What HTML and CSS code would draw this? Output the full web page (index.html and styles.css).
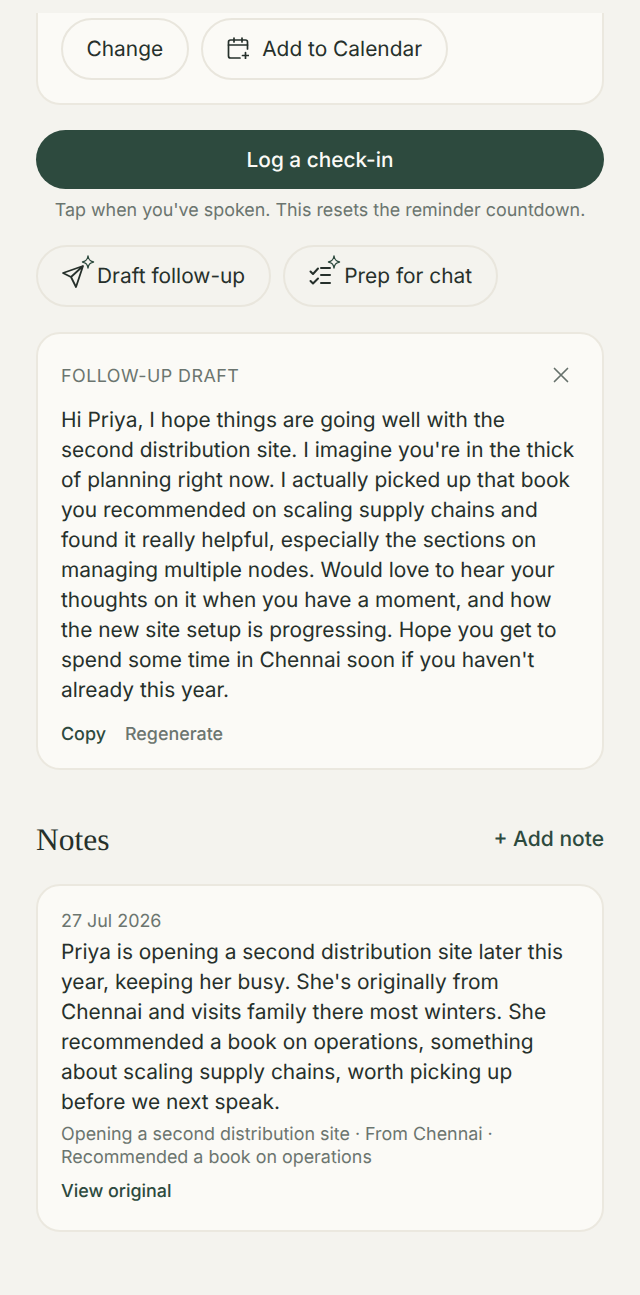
FILE: index.html
```html
<!doctype html>
<html lang="en">
<head>
	<meta charset="UTF-8"/>
	<title>Contact</title>
	<link rel="stylesheet" href="styles.css">
</head>
<body>
	<div class="wrap">
		<div class="card cardTop">
			<div class="btnRow">
				<a href="#" class="pill">Change</a>
				<a href="#" class="pill pillCal">
					<svg class="calIcon" width="22" height="22" viewBox="0 0 22 22" fill="none" stroke="#26302b" stroke-width="1.700" stroke-linecap="round" stroke-linejoin="round">
						<path d="M20.500 12V5a2 2 0 0 0-2-2H3.500a2 2 0 0 0-2 2v14a2 2 0 0 0 2 2H13"/>
						<path d="M1.500 8h19M7 1v4M15 1v4M18.500 15.500v6M15.500 18.500h6"/>
					</svg>
					Add to Calendar
				</a>
			</div>
		</div>

		<a href="#" class="logBtn">Log a check-in</a>
		<p class="hint">Tap when you've spoken. This resets the reminder countdown.</p>

		<div class="btnRow aiRow">
			<a href="#" class="pill pillAi">
				<svg class="aiIcon" width="36" height="36" viewBox="0 0 36 36" fill="none" stroke-linecap="round" stroke-linejoin="round">
					<path d="M23 12 3 19l8 4 5 10zM23 12 11 23" stroke="#26302b" stroke-width="1.800"/>
					<path d="M28 2c.5 3.500 1.500 5 5.500 6-4 1-5 2.500-5.500 6-.5-3.500-1.500-5-5.500-6 4-1 5-2.500 5.500-6z" stroke="#2d4a3e" stroke-width="1.400"/>
				</svg>
				Draft follow-up
			</a>
			<a href="#" class="pill pillAi">
				<svg class="aiIcon" width="36" height="36" viewBox="0 0 36 36" fill="none" stroke-linecap="round" stroke-linejoin="round">
					<path d="M3.500 17.500 6 20l5-5.500M3.500 27 6 29.500l5-5" stroke="#26302b" stroke-width="2"/>
					<path d="M14 14h9M14 21h9M14 29h9" stroke="#26302b" stroke-width="2"/>
					<path d="M27 2c.5 3.500 1.500 5 5.500 6-4 1-5 2.500-5.500 6-.5-3.500-1.500-5-5.500-6 4-1 5-2.500 5.500-6z" stroke="#2d4a3e" stroke-width="1.400"/>
				</svg>
				Prep for chat
			</a>
		</div>

		<div class="card draft">
			<div class="draftHead">
				<span class="label">FOLLOW-UP DRAFT</span>
				<svg class="closeIcon" width="16" height="16" viewBox="0 0 16 16" fill="none" stroke="#66716b" stroke-width="1.700" stroke-linecap="round">
					<path d="M1.500 1.500l13 13M14.500 1.500l-13 13"/>
				</svg>
			</div>
			<p class="draftTxt">Hi Priya, I hope things are going well with the second distribution site. I imagine you're in the thick of planning right now. I actually picked up that book you recommended on scaling supply chains and found it really helpful, especially the sections on managing multiple nodes. Would love to hear your thoughts on it when you have a moment, and how the new site setup is progressing. Hope you get to spend some time in Chennai soon if you haven't already this year.</p>
			<div class="draftAct">
				<a href="#" class="actCopy">Copy</a>
				<a href="#" class="actRegen">Regenerate</a>
			</div>
		</div>

		<div class="notesHead">
			<h2>Notes</h2>
			<a href="#" class="addNote">+ Add note</a>
		</div>

		<div class="card note">
			<div class="noteDate">27 Jul 2026</div>
			<p class="noteTxt">Priya is opening a second distribution site later this year, keeping her busy. She's originally from Chennai and visits family there most winters. She recommended a book on operations, something about scaling supply chains, worth picking up before we next speak.</p>
			<p class="noteTags">Opening a second distribution site · From Chennai · Recommended a book on operations</p>
			<a href="#" class="viewOrig">View original</a>
		</div>
	</div>
</body>
</html>
```

FILE: styles.css
```css
* { padding:0; margin:0; box-sizing:border-box; }
html, body { background:#f4f3ee; }
body { font-family:"Inter", "Liberation Sans", sans-serif; color:#26302b; text-rendering:geometricPrecision; }
a { text-decoration:none; color:inherit; }
.wrap { padding:13px 36px 64px; }
.card { background:#fbfaf6; border:2px solid #ebe8df; border-radius:24px; }
.cardTop { border-top:none; border-radius:0 0 24px 24px; padding:5px 23px 23px; }
.btnRow { display:flex; gap:12px; }
.pill { display:flex; align-items:center; height:62px; padding:2px 23.500px 0; border:2px solid #e9e6dd; border-radius:31px; font-size:20.900px; line-height:1; }
.pillCal { gap:13px; padding:2px 24px 0 24.500px; }
.calIcon { flex:none; margin-top:-4px; }
.logBtn { display:block; height:59px; margin-top:25px; line-height:62px; background:#2d4a3e; color:#fbfaf6; text-align:center; border-radius:30px; font-size:20.800px; font-weight:450; }
.hint { margin-top:11px; text-align:center; font-size:17.900px; line-height:22px; color:#6b756f; }
.aiRow { margin-top:23px; }
.pillAi { padding:2px 24px 0 22px; gap:1px; }
.aiIcon { flex:none; margin-top:-10px; }
.draft { margin-top:25px; padding:28px 23px 18px; }
.draftHead { display:flex; justify-content:space-between; align-items:center; padding-right:10px; height:30px; }
.closeIcon { margin-top:-4px; }
.label { font-size:17.900px; line-height:30px; letter-spacing:.47px; color:#6b756f; }
.draftTxt { margin-top:14px; font-size:20.900px; line-height:30px; }
.draftAct { display:flex; gap:19px; margin-top:14px; font-size:17.900px; line-height:30px; }
.actCopy { color:#2d4a3e; font-weight:450; }
.actRegen { color:#6b756f; font-weight:450; }
.notesHead { display:flex; justify-content:space-between; align-items:center; margin-top:50px; height:40px; }
.notesHead h2 { font-family:"Liberation Serif", serif; font-size:31.500px; font-weight:400; }
.addNote { padding-bottom:2px; color:#2d4a3e; font-size:21px; font-weight:450; }
.note { margin-top:24px; padding:24px 23px 25px; }
.noteDate { font-size:17.900px; line-height:24px; color:#6b756f; }
.noteTxt { font-size:20.900px; line-height:30px; margin-top:4px; }
.noteTags { margin-top:5px; font-size:17.900px; line-height:23px; color:#6b756f; }
.viewOrig { display:block; margin-top:10px; color:#2d4a3e; font-size:17.900px; line-height:26px; font-weight:450; }
```
